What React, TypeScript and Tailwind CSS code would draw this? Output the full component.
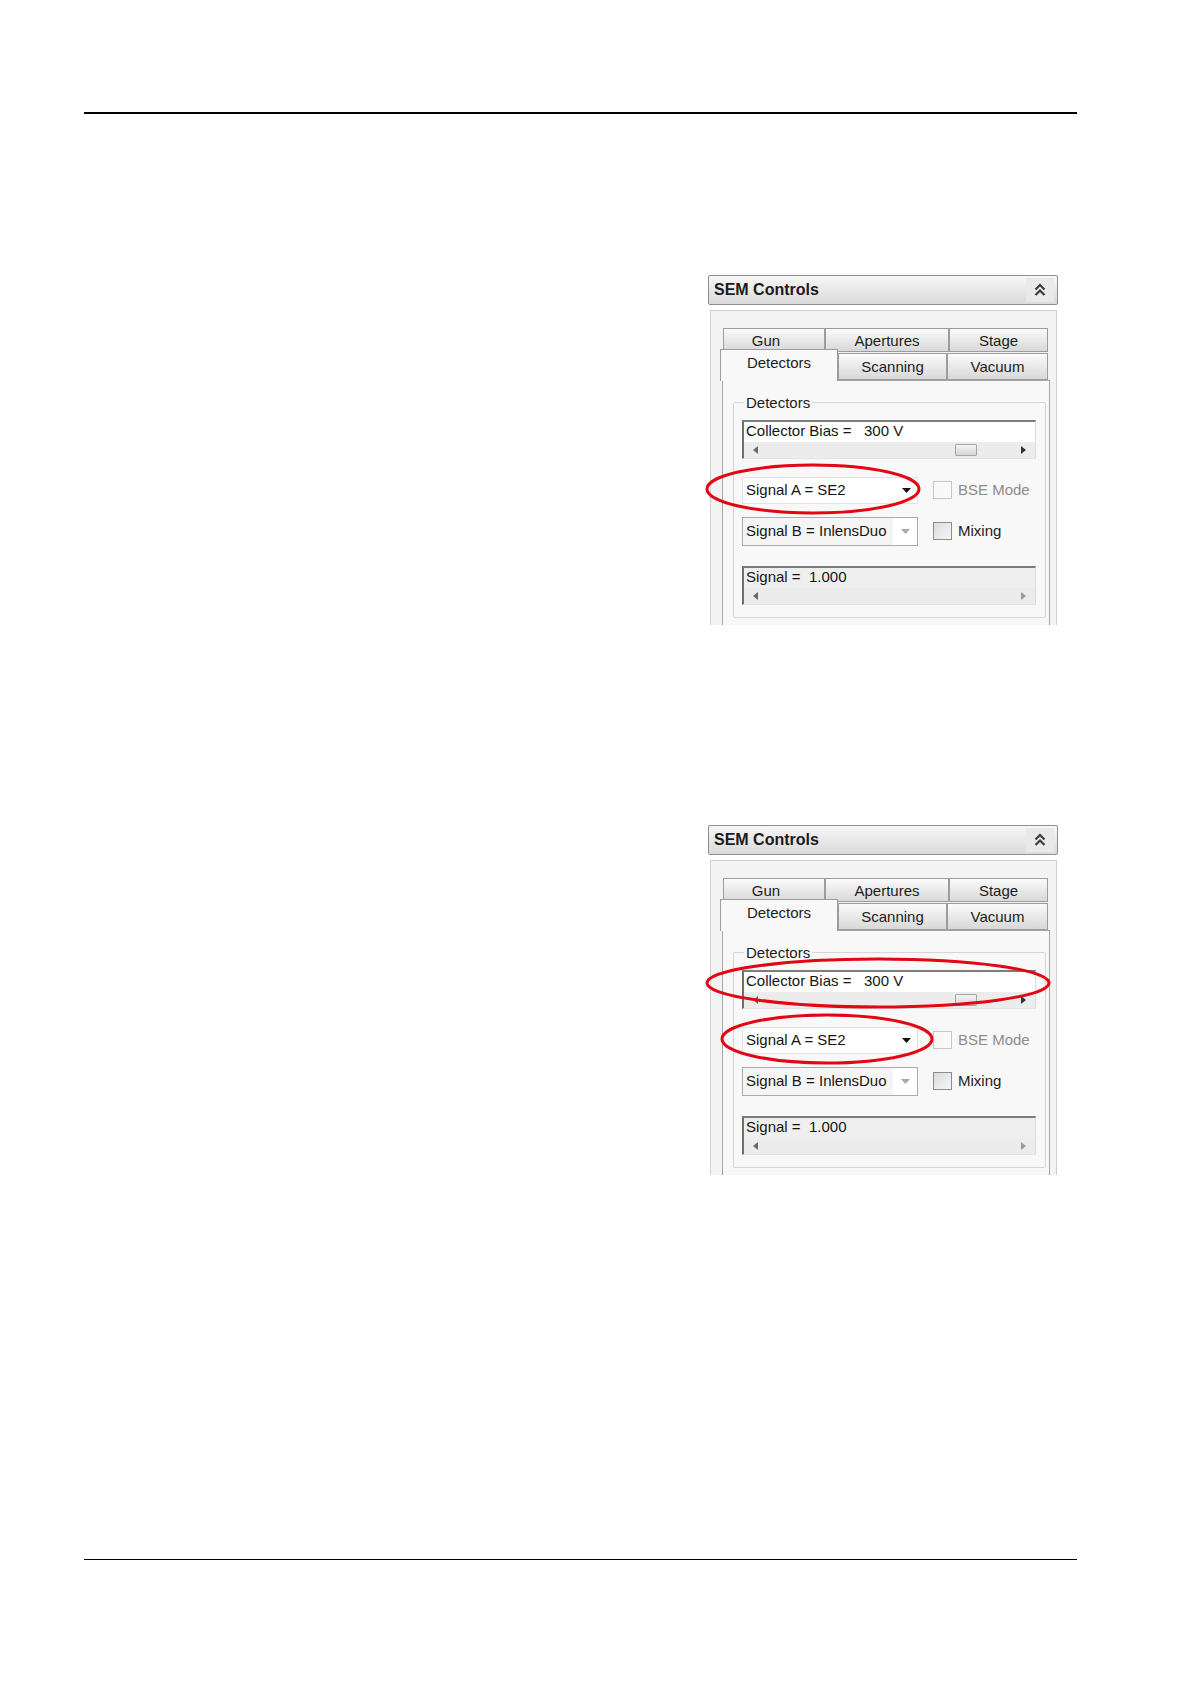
import React from "react";

type Ring = { cx: number; cy: number; rx: number; ry: number };

const font = { fontFamily: '"Liberation Sans", Arial, sans-serif' };

function ScrollRow({ thumb }: { thumb?: boolean }) {
  return (
    <div className="flex h-[16px] items-center bg-[#ececec] px-[9px]">
      <svg width="5" height="8" viewBox="0 0 5 8">
        <path d="M5 0 L0 4 L5 8 Z" fill="#6a6a6a" />
      </svg>
      <div className="flex-1" />
      {thumb && (
        <div className="mr-[44px] h-[12px] w-[22px] rounded-[1px] border border-[#a4a4a4] bg-gradient-to-b from-[#f4f4f4] to-[#d6d6d6]" />
      )}
      <svg width="5" height="8" viewBox="0 0 5 8">
        <path d="M0 0 L5 4 L0 8 Z" fill={thumb ? "#333" : "#9a9a9a"} />
      </svg>
    </div>
  );
}

function ValueBox({ label, thumb, disabled }: { label: string; thumb?: boolean; disabled?: boolean }) {
  return (
    <div className="ml-[8px] w-[294px] border-l-2 border-t-2 border-l-[#6e6e6e] border-t-[#7c7c7c] border-r border-b border-r-[#dcdcdc] border-b-[#e4e4e4]">
      <div
        className={`flex h-[20px] items-center whitespace-pre pl-[2px] text-[15px] text-[#151515] ${
          disabled ? "bg-[#efefef]" : "bg-white"
        }`}
      >
        {label}
      </div>
      <ScrollRow thumb={thumb} />
    </div>
  );
}

function Tab({ label, w, h, pad, active }: { label: string; w: string; h: string; pad: string; active?: boolean }) {
  return (
    <div
      className={`${w} ${h} ${pad} flex items-center justify-center border border-[#9c9c9c] text-[15px] text-[#1c1c1c] ${
        active
          ? "relative z-10 -mb-px border-b-0 bg-[#f8f8f8]"
          : "bg-gradient-to-b from-[#fbfbfb] to-[#d8d8d8]"
      }`}
    >
      {label}
    </div>
  );
}

function Panel({ rings }: { rings: Ring[] }) {
  return (
    <div className="relative ml-[708px] h-[350px] w-[350px]" style={font}>
      {/* header */}
      <div className="flex h-[30px] items-center justify-between rounded-[2px] border border-[#8e8e8e] bg-gradient-to-b from-[#f7f7f7] to-[#dadada] pl-[5px] pr-[3px]">
        <span className="text-[16px] font-bold text-[#1b1b1b]">SEM Controls</span>
        <div className="flex h-[24px] w-[28px] items-center justify-center bg-[#e9e9e9]">
          <svg width="12" height="14" viewBox="0 0 12 14">
            <polyline points="1.5,6.5 6,2 10.5,6.5" fill="none" stroke="#3c3c3c" strokeWidth="2.2" />
            <polyline points="1.5,12 6,7.5 10.5,12" fill="none" stroke="#3c3c3c" strokeWidth="2.2" />
          </svg>
        </div>
      </div>

      {/* body */}
      <div className="ml-[2px] mt-[5px] flex h-[315px] w-[347px] flex-col overflow-hidden border-l border-r border-t border-[#cfcfcf] bg-[#f3f3f3] pt-[17px]">
        <div className="ml-[9px] flex w-[330px] flex-1 flex-col">
          <div className="flex h-[24px] pl-[3px]">
            <Tab label="Gun" w="w-[102px]" h="h-[24px]" pad="pt-[4px] pr-[16px]" />
            <Tab label="Apertures" w="w-[124px]" h="h-[24px]" pad="pt-[4px]" />
            <Tab label="Stage" w="w-[99px]" h="h-[24px]" pad="pt-[4px]" />
          </div>
          <div className="flex h-[28px] items-end">
            <Tab label="Detectors" w="w-[118px]" h="h-[32px]" pad="pb-[3px]" active />
            <Tab label="Scanning" w="w-[109px]" h="h-[27px]" pad="pt-[3px]" />
            <Tab label="Vacuum" w="w-[101px]" h="h-[27px]" pad="pt-[3px]" />
          </div>

          <div className="ml-[2px] flex w-[328px] flex-1 flex-col border-l border-r border-t border-[#a6a6a6] bg-[#f8f8f8] pt-[13px]">
            <fieldset className="ml-[10px] h-[224px] w-[313px] rounded-[2px] border border-[#d6d6d6]">
              <legend className="ml-[10px] px-[2px] text-[15px] leading-[18px] text-[#1c1c1c]">Detectors</legend>

              <div className="mt-[8px]">
                <ValueBox label="Collector Bias =   300 V" thumb />
              </div>

              <div className="mt-[18px] flex items-center">
                <div className="ml-[8px] flex h-[27px] w-[176px] items-center justify-between border border-[#e2e2e2] bg-white pl-[3px] pr-[6px] text-[15px] text-[#151515]">
                  <span>Signal A = SE2</span>
                  <svg width="9" height="5" viewBox="0 0 9 5">
                    <path d="M0 0 L9 0 L4.5 5 Z" fill="#111" />
                  </svg>
                </div>
                <div className="ml-[15px] h-[18px] w-[19px] border border-[#c6c6c6] bg-[#f9f9f9]" />
                <span className="ml-[6px] text-[15px] text-[#8c8c8c]">BSE Mode</span>
              </div>

              <div className="mt-[13px] flex items-center">
                <div className="ml-[8px] flex h-[29px] w-[176px] items-center border border-[#ababab] bg-white text-[15px] text-[#151515]">
                  <span className="flex h-full w-[150px] items-center bg-[#f5f5f5] pl-[3px]">Signal B = InlensDuo</span>
                  <div className="flex flex-1 items-center justify-center">
                    <svg width="9" height="5" viewBox="0 0 9 5">
                      <path d="M0 0 L9 0 L4.5 5 Z" fill="#a8a8a8" />
                    </svg>
                  </div>
                </div>
                <div className="ml-[15px] h-[18px] w-[19px] border border-[#8c8c8c] bg-gradient-to-br from-[#dcdcdc] to-[#f6f6f6]" />
                <span className="ml-[6px] text-[15px] text-[#1c1c1c]">Mixing</span>
              </div>

              <div className="mt-[20px]">
                <ValueBox label="Signal =  1.000" disabled />
              </div>
            </fieldset>
          </div>
        </div>
      </div>

      {/* red markings */}
      <svg className="pointer-events-none absolute left-0 top-0 overflow-visible" width="350" height="350">
        {rings.map((r, i) => (
          <ellipse key={i} cx={r.cx} cy={r.cy} rx={r.rx} ry={r.ry} fill="none" stroke="#e30613" strokeWidth="3" />
        ))}
      </svg>
    </div>
  );
}

export default function App() {
  return (
    <div className="h-[1684px] w-[1190px] bg-white pt-[112px]">
      <div className="ml-[84px] h-[1.5px] w-[993px] bg-black" />

      <div className="mt-[161px]">
        <Panel rings={[{ cx: 105, cy: 214, rx: 106, ry: 24 }]} />
      </div>

      <div className="mt-[200px]">
        <Panel
          rings={[
            { cx: 170, cy: 158, rx: 171, ry: 24 },
            { cx: 119, cy: 214, rx: 105, ry: 24 },
          ]}
        />
      </div>

      <div className="ml-[84px] mt-[384px] h-[1.5px] w-[993px] bg-black" />
    </div>
  );
}
